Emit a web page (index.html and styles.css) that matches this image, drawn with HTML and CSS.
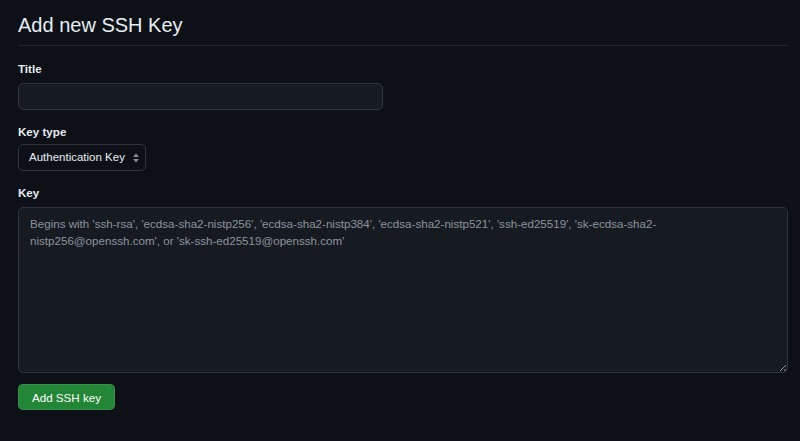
FILE: index.html
```html
<!DOCTYPE html>
<html lang="en">
<head>
<meta charset="utf-8">
<title>Add new SSH Key</title>
<link rel="stylesheet" href="styles.css">
</head>
<body>
<main class="page">
  <div class="subhead">
    <h1 class="subhead-title">Add new SSH Key</h1>
  </div>
  <form class="form">
    <div class="group">
      <label class="label" for="title">Title</label>
      <input class="input" id="title" type="text">
    </div>
    <div class="group">
      <label class="label">Key type</label>
      <div class="select">
        <span>Authentication Key</span>
        <svg class="select-arrow" width="6" height="10" viewBox="0 0 6 10" aria-hidden="true">
          <path d="M3 0.5 L5.8 4 H0.2 Z" fill="#8b949e"/>
          <path d="M3 9.5 L5.8 6 H0.2 Z" fill="#8b949e"/>
        </svg>
      </div>
    </div>
    <div class="group">
      <label class="label" for="key">Key</label>
      <textarea class="textarea" id="key" placeholder="Begins with 'ssh-rsa', 'ecdsa-sha2-nistp256', 'ecdsa-sha2-nistp384', 'ecdsa-sha2-nistp521', 'ssh-ed25519', 'sk-ecdsa-sha2-nistp256@openssh.com', or 'sk-ssh-ed25519@openssh.com'"></textarea>
    </div>
    <div class="actions">
      <button class="btn-primary" type="button">Add SSH key</button>
    </div>
  </form>
</main>
</body>
</html>
```

FILE: styles.css
```css
html, body {
  margin: 0;
  padding: 0;
  background: #0d1117;
}

body {
  font-family: "Liberation Sans", Arial, sans-serif;
  color: #e6edf3;
  font-size: 11.6px;
  line-height: 17px;
}

.page {
  padding: 13px 12px 0 18px;
}

.subhead {
  border-bottom: 1px solid #21262d;
  padding-bottom: 8px;
}

.subhead-title {
  margin: 0;
  font-size: 20px;
  line-height: 24px;
  font-weight: 400;
  color: #e6edf3;
}

.form {
  display: flex;
  flex-direction: column;
  padding-top: 14px;
}

.group {
  display: flex;
  flex-direction: column;
  align-items: flex-start;
  margin-bottom: 13px;
}

.label {
  font-weight: 700;
  font-size: 11.6px;
  line-height: 17px;
  margin-bottom: 6px;
  color: #e6edf3;
}

.input {
  box-sizing: border-box;
  width: 365px;
  height: 27px;
  background: #161b22;
  border: 1px solid #30363d;
  border-radius: 5px;
  color: #e6edf3;
  font: inherit;
  padding: 0 10px;
  outline: none;
}

.select {
  box-sizing: border-box;
  width: 128px;
  height: 27px;
  display: flex;
  align-items: center;
  gap: 8px;
  padding: 0 0 0 10px;
  background: #0d1117;
  border: 1px solid #30363d;
  border-radius: 5px;
  color: #e6edf3;
  font-size: 11.5px;
  margin-top: -2px;
  white-space: nowrap;
}

.select-arrow {
  display: block;
  flex: none;
}

.textarea {
  box-sizing: border-box;
  width: 770px;
  height: 166px;
  background: #161b22;
  border: 1px solid #30363d;
  border-radius: 5px;
  color: #e6edf3;
  font-family: "Liberation Sans", Arial, sans-serif;
  font-size: 11.6px;
  line-height: 17px;
  padding: 7px 11px;
  margin-top: 0;
  resize: vertical;
  outline: none;
  display: block;
}

.textarea::placeholder {
  color: #8b949e;
  opacity: 1;
}

.actions {
  display: flex;
  margin-top: -2px;
}

.btn-primary {
  box-sizing: border-box;
  height: 26px;
  width: 97px;
  background: #238636;
  border: 1px solid rgba(240, 246, 252, 0.1);
  border-radius: 5px;
  color: #ffffff;
  font-family: "Liberation Sans", Arial, sans-serif;
  font-size: 11.6px;
  font-weight: 400;
  padding: 0;
}
```
